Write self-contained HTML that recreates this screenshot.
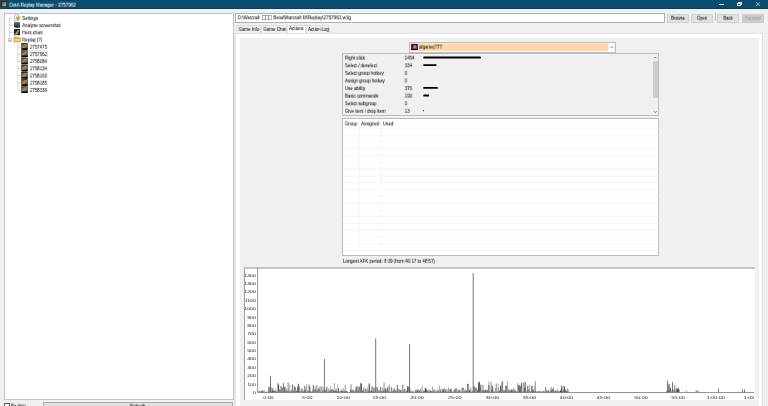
<!DOCTYPE html><html><head><meta charset="utf-8"><style>
html,body{margin:0;padding:0;}
body{width:768px;height:406px;overflow:hidden;position:relative;background:#f0f0f0;font-family:"Liberation Sans",sans-serif;}
.t{position:absolute;left:0;top:0;white-space:nowrap;line-height:1;transform-origin:0 0;will-change:transform;}
.b{position:absolute;box-sizing:border-box;}
svg{position:absolute;left:0;top:0;overflow:visible;}
</style></head><body>
<div class="b" style="left:0.00px;top:0.00px;width:768.00px;height:8.80px;background:#084d70;"></div>
<div class="b" style="left:0.00px;top:8.20px;width:768.00px;height:0.60px;background:#063f5c;"></div>
<svg width="768" height="406"><rect x="1.3" y="1.3" width="5.6" height="5.7" fill="#1c140c"/><path d="M2.0 2.0 h4.2 v4.3 h-4.2z" fill="#b48c5c"/><path d="M2.3 2.2 h2.2 v2.4 h-2.2z" fill="#7c5a36"/><path d="M4.4 4.4 h1.6 v1.6 h-1.6z" fill="#d4b080"/></svg>
<div class="t" style="transform:translate(9.40px,2.64px) scaleX(0.83);font-size:5.5px;color:#dbe8f0;-webkit-text-stroke:0.03px #dbe8f0;-webkit-text-stroke:0.1px #dbe8f0;">DotA Replay Manager - 2757962</div>
<div class="b" style="left:719.30px;top:4.20px;width:4.70px;height:0.45px;background:#dbe6ec;"></div>
<div class="b" style="left:737.20px;top:3.00px;width:3.80px;height:3.00px;border:0.45px solid #dbe6ec;"></div>
<div class="b" style="left:738.20px;top:2.20px;width:3.80px;height:3.00px;border-top:0.45px solid #dbe6ec;border-right:0.45px solid #dbe6ec;"></div>
<svg width="768" height="406"><path d="M755.9 2.3 L760.1 6.1 M760.1 2.3 L755.9 6.1" stroke="#e8eef2" stroke-width="0.65"/></svg>
<div class="b" style="left:4.00px;top:13.00px;width:229.90px;height:386.70px;background:#fff;border:0.8px solid #bfc3c9;"></div>
<svg width="768" height="406"><g stroke="#c0c0c0" stroke-width="0.6"><path d="M9.4 17.9 V38.2 M9.4 17.9 H13.8 M9.4 25.1 H13.8 M9.4 32.3 H13.8"/><path d="M17.8 42.5 V90.4 M17.8 47 H21 M17.8 54.2 H21 M17.8 61.4 H21 M17.8 68.6 H21 M17.8 75.8 H21 M17.8 83 H21 M17.8 90.2 H21"/></g></svg>
<div class="b" style="left:7.90px;top:38.00px;width:3.90px;height:3.90px;background:#f2f4f7;border:0.5px solid #c8ccd4;"></div>
<div class="b" style="left:8.90px;top:39.70px;width:1.90px;height:0.50px;background:#a0acc4;"></div>
<svg width="768" height="406"><defs><linearGradient id="gk" x1="0" y1="0" x2="1" y2="1"><stop offset="0" stop-color="#4a3c28"/><stop offset="0.5" stop-color="#a8895a"/><stop offset="1" stop-color="#5a4830"/></linearGradient><linearGradient id="fd" x1="0" y1="0" x2="0" y2="1"><stop offset="0" stop-color="#fbe9a8"/><stop offset="1" stop-color="#e0b040"/></linearGradient><linearGradient id="mn" x1="0" y1="0" x2="0" y2="1"><stop offset="0" stop-color="#6a6e74"/><stop offset="1" stop-color="#34383e"/></linearGradient></defs><rect x="14.3" y="14.8" width="4.6" height="5.8" fill="#eaf2fa" stroke="#8aa4c0" stroke-width="0.5"/><path d="M16.4 16.9 h1.8 v-1.1 l2.0 2.3 l-2.0 2.3 v-1.1 h-1.8z" fill="#e9a228" stroke="#b87810" stroke-width="0.3"/><rect x="14.0" y="22.0" width="6.0" height="4.6" rx="0.5" fill="url(#mn)"/><path d="M14.0 26.2 h6.0 v0.8 q-3 1.4 -6 0z" fill="#050505"/><circle cx="19.3" cy="22.9" r="0.6" fill="#2a8a80"/><circle cx="19.4" cy="26.9" r="0.75" fill="#2838b0"/><rect x="14.0" y="29.0" width="6.0" height="6.2" fill="#1e242c"/><path d="M15.0 34.6 L17.6 30.0 L19.4 30.6 L17.0 34.8z" fill="#c8a060"/><rect x="14.4" y="33.2" width="1.6" height="1.6" fill="#5080b0"/><path d="M14.1 37.0 h2.4 l0.7 0.8 h3.0 v4.1 h-6.1z" fill="#e0b040" stroke="#b88a28" stroke-width="0.6"/><path d="M14.8 39.0 h4.8 v2.2 h-4.8z" fill="#f8e070"/>
<rect x="21.1" y="43.10" width="6.6" height="6.7" fill="#231d12"/><rect x="21.1" y="43.90" width="0.9" height="5.2" fill="#6a6a6a"/><rect x="22.0" y="43.90" width="5.0" height="4.4" fill="url(#gk)"/><rect x="22.3" y="48.40" width="5.4" height="1.4" fill="#050505"/><rect x="21.1" y="50.30" width="6.6" height="6.7" fill="#231d12"/><rect x="21.1" y="51.10" width="0.9" height="5.2" fill="#6a6a6a"/><rect x="22.0" y="51.10" width="5.0" height="4.4" fill="url(#gk)"/><rect x="22.3" y="55.60" width="5.4" height="1.4" fill="#050505"/><rect x="21.1" y="57.50" width="6.6" height="6.7" fill="#231d12"/><rect x="21.1" y="58.30" width="0.9" height="5.2" fill="#6a6a6a"/><rect x="22.0" y="58.30" width="5.0" height="4.4" fill="url(#gk)"/><rect x="22.3" y="62.80" width="5.4" height="1.4" fill="#050505"/><rect x="21.1" y="64.70" width="6.6" height="6.7" fill="#231d12"/><rect x="21.1" y="65.50" width="0.9" height="5.2" fill="#6a6a6a"/><rect x="22.0" y="65.50" width="5.0" height="4.4" fill="url(#gk)"/><rect x="22.3" y="70.00" width="5.4" height="1.4" fill="#050505"/><rect x="21.1" y="71.90" width="6.6" height="6.7" fill="#231d12"/><rect x="21.1" y="72.70" width="0.9" height="5.2" fill="#6a6a6a"/><rect x="22.0" y="72.70" width="5.0" height="4.4" fill="url(#gk)"/><rect x="22.3" y="77.20" width="5.4" height="1.4" fill="#050505"/><rect x="21.1" y="79.10" width="6.6" height="6.7" fill="#231d12"/><rect x="21.1" y="79.90" width="0.9" height="5.2" fill="#6a6a6a"/><rect x="22.0" y="79.90" width="5.0" height="4.4" fill="url(#gk)"/><rect x="22.3" y="84.40" width="5.4" height="1.4" fill="#050505"/><rect x="21.1" y="86.30" width="6.6" height="6.7" fill="#231d12"/><rect x="21.1" y="87.10" width="0.9" height="5.2" fill="#6a6a6a"/><rect x="22.0" y="87.10" width="5.0" height="4.4" fill="url(#gk)"/><rect x="22.3" y="91.60" width="5.4" height="1.4" fill="#050505"/></svg>
<div class="t" style="transform:translate(22.20px,15.91px) scaleX(0.83);font-size:5.3px;color:#000;-webkit-text-stroke:0.03px #000;">Settings</div>
<div class="t" style="transform:translate(22.20px,23.11px) scaleX(0.83);font-size:5.3px;color:#000;-webkit-text-stroke:0.03px #000;">Analyze screenshot</div>
<div class="t" style="transform:translate(22.20px,30.31px) scaleX(0.83);font-size:5.3px;color:#000;-webkit-text-stroke:0.03px #000;">Hero chart</div>
<div class="t" style="transform:translate(22.20px,37.51px) scaleX(0.83);font-size:5.3px;color:#000;-webkit-text-stroke:0.03px #000;">Replay [7]</div>
<div class="t" style="transform:translate(29.90px,44.71px) scaleX(0.83);font-size:5.3px;color:#000;-webkit-text-stroke:0.03px #000;">2757475</div>
<div class="b" style="left:29.20px;top:50.20px;width:18.60px;height:7.30px;border:0.5px solid #ececec;"></div>
<div class="t" style="transform:translate(29.90px,51.91px) scaleX(0.83);font-size:5.3px;color:#000;-webkit-text-stroke:0.03px #000;">2757962</div>
<div class="t" style="transform:translate(29.90px,59.11px) scaleX(0.83);font-size:5.3px;color:#000;-webkit-text-stroke:0.03px #000;">2758084</div>
<div class="t" style="transform:translate(29.90px,66.31px) scaleX(0.83);font-size:5.3px;color:#000;-webkit-text-stroke:0.03px #000;">2758134</div>
<div class="t" style="transform:translate(29.90px,73.51px) scaleX(0.83);font-size:5.3px;color:#000;-webkit-text-stroke:0.03px #000;">2758160</div>
<div class="t" style="transform:translate(29.90px,80.71px) scaleX(0.83);font-size:5.3px;color:#000;-webkit-text-stroke:0.03px #000;">2758185</div>
<div class="t" style="transform:translate(29.90px,87.91px) scaleX(0.83);font-size:5.3px;color:#000;-webkit-text-stroke:0.03px #000;">2758339</div>
<div class="b" style="left:4.20px;top:403.00px;width:5.70px;height:5.70px;background:#fff;border:0.5px solid #555;"></div>
<div class="t" style="transform:translate(10.90px,403.51px) scaleX(0.83);font-size:5.3px;color:#000;-webkit-text-stroke:0.03px #000;">By date</div>
<div class="b" style="left:42.90px;top:402.20px;width:190.50px;height:6.00px;background:#e1e1e1;border:0.6px solid #adadad;"></div>
<div class="t" style="transform:translate(129.80px,403.81px) scaleX(0.83);font-size:5.3px;color:#000;-webkit-text-stroke:0.03px #000;">Refresh</div>
<div class="b" style="left:235.30px;top:13.00px;width:429.70px;height:10.00px;background:#fff;border:0.7px solid #b0b0b0;"></div>
<div class="t" style="transform:translate(237.80px,15.31px) scaleX(0.83);font-size:5.3px;color:#000;-webkit-text-stroke:0.03px #000;">D:\Warcraft</div>
<svg width="768" height="406"><rect x="262.3" y="15.3" width="2.9" height="4.5" fill="none" stroke="#7a7068" stroke-width="0.5"/><rect x="265.5" y="15.3" width="2.9" height="4.5" fill="none" stroke="#7a7068" stroke-width="0.5"/><rect x="268.7" y="15.3" width="2.9" height="4.5" fill="none" stroke="#7a7068" stroke-width="0.5"/></svg>
<div class="t" style="transform:translate(273.40px,15.31px) scaleX(0.87);font-size:5.3px;color:#000;-webkit-text-stroke:0.03px #000;">Beta\Warcraft III\Replay\2757962.w3g</div>
<div class="b" style="left:667.00px;top:14.00px;width:22.00px;height:9.00px;background:#e2e2e2;border:0.5px solid #cfcfcf;"></div>
<div class="t" style="transform:translate(671.10px,16.71px) scaleX(0.9);font-size:4.6px;color:#000;-webkit-text-stroke:0.03px #000;">Browse</div>
<div class="b" style="left:691.00px;top:14.00px;width:22.00px;height:9.00px;background:#e2e2e2;border:0.5px solid #cfcfcf;"></div>
<div class="t" style="transform:translate(696.94px,16.71px) scaleX(0.9);font-size:4.6px;color:#000;-webkit-text-stroke:0.03px #000;">Open</div>
<div class="b" style="left:717.00px;top:14.00px;width:22.00px;height:9.00px;background:#e2e2e2;border:0.5px solid #cfcfcf;"></div>
<div class="t" style="transform:translate(723.40px,16.71px) scaleX(0.9);font-size:4.6px;color:#000;-webkit-text-stroke:0.03px #000;">Back</div>
<div class="b" style="left:742.00px;top:14.00px;width:22.00px;height:9.00px;background:#cdcdcd;"></div>
<div class="t" style="transform:translate(745.41px,16.71px) scaleX(0.9);font-size:4.6px;color:#9c9c9c;-webkit-text-stroke:0.03px #9c9c9c;">Forward</div>
<div class="b" style="left:715.10px;top:13.20px;width:0.70px;height:7.80px;background:#bcbcbc;"></div>
<div class="b" style="left:234.00px;top:32.50px;width:529.40px;height:380.00px;background:#fff;border:0.7px solid #e2e2e2;border-left:2px solid #e6e6e6;"></div>
<div class="b" style="left:240.00px;top:38.00px;width:519.20px;height:370.00px;background:#f0f0f0;"></div>
<div class="b" style="left:236.40px;top:25.30px;width:24.70px;height:7.60px;background:#f0f0f0;border:0.6px solid #dedede;border-bottom:none;"></div>
<div class="t" style="transform:translate(238.60px,27.91px) scaleX(0.96);font-size:4.6px;color:#000;-webkit-text-stroke:0.03px #000;-webkit-text-stroke:0.03px #000;">Game Info</div>
<div class="b" style="left:261.30px;top:25.30px;width:25.50px;height:7.60px;background:#f0f0f0;border:0.6px solid #dedede;border-bottom:none;"></div>
<div class="t" style="transform:translate(263.40px,27.91px) scaleX(0.96);font-size:4.6px;color:#000;-webkit-text-stroke:0.03px #000;-webkit-text-stroke:0.03px #000;">Game Chat</div>
<div class="b" style="left:306.20px;top:25.30px;width:23.20px;height:7.60px;background:#f0f0f0;border:0.6px solid #dedede;border-bottom:none;"></div>
<div class="t" style="transform:translate(308.10px,27.91px) scaleX(0.96);font-size:4.6px;color:#000;-webkit-text-stroke:0.03px #000;-webkit-text-stroke:0.03px #000;">Action Log</div>
<div class="b" style="left:287.00px;top:24.80px;width:18.80px;height:8.40px;background:#fff;border:0.6px solid #dedede;border-bottom:none;"></div>
<div class="t" style="transform:translate(289.00px,27.11px) scaleX(0.96);font-size:4.6px;color:#000;-webkit-text-stroke:0.03px #000;-webkit-text-stroke:0.03px #000;">Actions</div>
<div class="b" style="left:409.40px;top:42.20px;width:206.60px;height:10.60px;background:#fff;border:0.6px solid #bcbcbc;"></div>
<svg width="768" height="406"><rect x="410.3" y="43.4" width="198.1" height="7.6" fill="#fed6a8"/><rect x="411.2" y="43.9" width="6.6" height="6.1" fill="#18121e"/><path d="M412.2 49.6 L413.0 45.2 L414.6 44.4 L416.6 45.6 L417.2 49.6z" fill="#6a58a0"/><path d="M413.4 46.0 L415.6 45.4 L416.2 48.0 L414.0 48.6z" fill="#9c8cc8"/><rect x="411.2" y="48.8" width="6.6" height="1.2" fill="#0a0810"/></svg>
<div class="t" style="transform:translate(419.00px,44.61px) scaleX(0.83);font-size:5.3px;color:#000;-webkit-text-stroke:0.03px #000;">afganec777</div>
<svg width="768" height="406"><path d="M610.6 46.6 L611.9 47.9 L613.2 46.6" fill="none" stroke="#404040" stroke-width="0.6"/></svg>
<div class="b" style="left:342.30px;top:53.40px;width:316.70px;height:62.30px;background:#f0f0f0;border:0.7px solid #bcbcbc;"></div>
<div class="t" style="transform:translate(344.90px,55.61px) scaleX(0.83);font-size:5.3px;color:#000;-webkit-text-stroke:0.03px #000;">Right click</div>
<div class="t" style="transform:translate(404.70px,55.61px) scaleX(0.83);font-size:5.3px;color:#000;-webkit-text-stroke:0.03px #000;">1454</div>
<svg width="768" height="406"><rect x="423.3" y="56.60" width="57.6" height="1.8" rx="0.4" fill="#000"/></svg>
<div class="t" style="transform:translate(344.90px,63.21px) scaleX(0.83);font-size:5.3px;color:#000;-webkit-text-stroke:0.03px #000;">Select / deselect</div>
<div class="t" style="transform:translate(404.70px,63.21px) scaleX(0.83);font-size:5.3px;color:#000;-webkit-text-stroke:0.03px #000;">334</div>
<svg width="768" height="406"><rect x="423.3" y="64.20" width="13.2" height="1.8" rx="0.4" fill="#000"/></svg>
<div class="t" style="transform:translate(344.90px,70.81px) scaleX(0.83);font-size:5.3px;color:#000;-webkit-text-stroke:0.03px #000;">Select group hotkey</div>
<div class="t" style="transform:translate(404.70px,70.81px) scaleX(0.83);font-size:5.3px;color:#000;-webkit-text-stroke:0.03px #000;">0</div>
<div class="t" style="transform:translate(344.90px,78.41px) scaleX(0.83);font-size:5.3px;color:#000;-webkit-text-stroke:0.03px #000;">Assign group hotkey</div>
<div class="t" style="transform:translate(404.70px,78.41px) scaleX(0.83);font-size:5.3px;color:#000;-webkit-text-stroke:0.03px #000;">0</div>
<div class="t" style="transform:translate(344.90px,86.01px) scaleX(0.83);font-size:5.3px;color:#000;-webkit-text-stroke:0.03px #000;">Use ability</div>
<div class="t" style="transform:translate(404.70px,86.01px) scaleX(0.83);font-size:5.3px;color:#000;-webkit-text-stroke:0.03px #000;">376</div>
<svg width="768" height="406"><rect x="423.3" y="87.00" width="14.5" height="1.8" rx="0.4" fill="#000"/></svg>
<div class="t" style="transform:translate(344.90px,93.61px) scaleX(0.83);font-size:5.3px;color:#000;-webkit-text-stroke:0.03px #000;">Basic commands</div>
<div class="t" style="transform:translate(404.70px,93.61px) scaleX(0.83);font-size:5.3px;color:#000;-webkit-text-stroke:0.03px #000;">190</div>
<svg width="768" height="406"><rect x="423.3" y="94.60" width="5.8" height="1.8" rx="0.4" fill="#000"/></svg>
<div class="t" style="transform:translate(344.90px,101.21px) scaleX(0.83);font-size:5.3px;color:#000;-webkit-text-stroke:0.03px #000;">Select subgroup</div>
<div class="t" style="transform:translate(404.70px,101.21px) scaleX(0.83);font-size:5.3px;color:#000;-webkit-text-stroke:0.03px #000;">0</div>
<div class="t" style="transform:translate(344.90px,108.81px) scaleX(0.83);font-size:5.3px;color:#000;-webkit-text-stroke:0.03px #000;">Give item / drop item</div>
<div class="t" style="transform:translate(404.70px,108.81px) scaleX(0.83);font-size:5.3px;color:#000;-webkit-text-stroke:0.03px #000;">13</div>
<svg width="768" height="406"><rect x="423.3" y="109.80" width="0.5" height="1.8" rx="0.4" fill="#000"/></svg>
<div class="b" style="left:651.40px;top:54.10px;width:7.00px;height:61.00px;background:#f0f0f0;"></div>
<div class="b" style="left:652.50px;top:61.30px;width:5.60px;height:37.00px;background:#cdcdcd;"></div>
<svg width="768" height="406"><path d="M654 58.3 L655.3 57 L656.6 58.3 M654 111.3 L655.3 112.6 L656.6 111.3" fill="none" stroke="#404040" stroke-width="0.7"/></svg>
<div class="b" style="left:342.30px;top:118.40px;width:317.20px;height:137.60px;background:#fff;border:0.7px solid #bcbcbc;"></div>
<svg width="768" height="406"><g stroke="#ebebeb" stroke-width="0.5">
<path d="M343 128.3 H659"/>
<path d="M343 135.1 H659"/>
<path d="M343 141.9 H659"/>
<path d="M343 148.7 H659"/>
<path d="M343 155.5 H659"/>
<path d="M343 162.3 H659"/>
<path d="M343 169.1 H659"/>
<path d="M343 175.9 H659"/>
<path d="M343 182.7 H659"/>
<path d="M343 189.5 H659"/>
<path d="M343 196.3 H659"/>
<path d="M343 203.1 H659"/>
<path d="M343 209.9 H659"/>
<path d="M343 216.7 H659"/>
<path d="M343 223.5 H659"/>
<path d="M343 230.3 H659"/>
<path d="M343 237.1 H659"/>
<path d="M343 243.9 H659"/>
<path d="M343 250.7 H659"/>
<path d="M359.2 119 V254.6 M381.1 119 V254.6"/></g></svg>
<div class="t" style="transform:translate(344.80px,121.41px) scaleX(0.83);font-size:5.3px;color:#000;-webkit-text-stroke:0.03px #000;">Group</div>
<div class="t" style="transform:translate(361.10px,121.41px) scaleX(0.83);font-size:5.3px;color:#000;-webkit-text-stroke:0.03px #000;">Assigned</div>
<div class="t" style="transform:translate(383.00px,121.41px) scaleX(0.83);font-size:5.3px;color:#000;-webkit-text-stroke:0.03px #000;">Used</div>
<div class="t" style="transform:translate(343.00px,258.81px) scaleX(0.83);font-size:5.3px;color:#000;-webkit-text-stroke:0.03px #000;">Longest AFK period: 8:39 (from 40:17 to 48:57)</div>
<div class="b" style="left:244.40px;top:267.10px;width:510.20px;height:132.70px;background:#fff;border-left:0.9px solid #a0a0a0;border-top:2px solid #c6c6c6;"></div>
<svg width="768" height="406"><rect x="258.50" y="391.05" width="0.7" height="1.45" fill="#4e4e4e"/><rect x="259.10" y="391.19" width="0.7" height="1.31" fill="#4e4e4e"/><rect x="259.70" y="391.61" width="0.7" height="0.89" fill="#8c8c8c"/><rect x="260.90" y="391.07" width="1.4" height="1.43" fill="#4e4e4e"/><rect x="261.50" y="391.14" width="1.1" height="1.36" fill="#666666"/><rect x="262.10" y="391.13" width="0.9" height="1.37" fill="#a0a0a0"/><rect x="262.70" y="390.47" width="0.7" height="2.03" fill="#4e4e4e"/><rect x="263.30" y="390.10" width="1.4" height="2.40" fill="#a0a0a0"/><rect x="265.80" y="391.54" width="1.1" height="0.96" fill="#4e4e4e"/><rect x="268.00" y="386.91" width="0.9" height="5.59" fill="#8c8c8c"/><rect x="268.60" y="390.87" width="0.7" height="1.63" fill="#4e4e4e"/><rect x="269.20" y="386.94" width="1.1" height="5.56" fill="#7a7a7a"/><rect x="269.80" y="387.97" width="0.7" height="4.53" fill="#8c8c8c"/><rect x="270.40" y="385.13" width="0.7" height="7.37" fill="#b0b0b0"/><rect x="271.00" y="387.74" width="1.4" height="4.76" fill="#b0b0b0"/><rect x="271.60" y="390.56" width="1.4" height="1.94" fill="#4e4e4e"/><rect x="272.20" y="388.27" width="1.1" height="4.23" fill="#666666"/><rect x="272.80" y="391.04" width="1.4" height="1.46" fill="#585858"/><rect x="273.40" y="390.77" width="1.4" height="1.73" fill="#666666"/><rect x="274.00" y="390.99" width="1.4" height="1.51" fill="#7a7a7a"/><rect x="274.60" y="391.40" width="0.9" height="1.10" fill="#666666"/><rect x="275.20" y="389.36" width="0.7" height="3.14" fill="#7a7a7a"/><rect x="275.80" y="390.66" width="0.9" height="1.84" fill="#7a7a7a"/><rect x="276.40" y="390.65" width="0.7" height="1.85" fill="#b0b0b0"/><rect x="277.00" y="382.74" width="1.4" height="9.76" fill="#b0b0b0"/><rect x="277.60" y="390.88" width="0.7" height="1.62" fill="#8c8c8c"/><rect x="278.00" y="384.58" width="1.1" height="7.92" fill="#4e4e4e"/><rect x="278.60" y="390.57" width="0.7" height="1.93" fill="#a0a0a0"/><rect x="279.20" y="389.43" width="1.4" height="3.07" fill="#666666"/><rect x="279.80" y="391.01" width="1.4" height="1.49" fill="#7a7a7a"/><rect x="280.40" y="385.93" width="1.4" height="6.57" fill="#8c8c8c"/><rect x="281.00" y="391.50" width="1.1" height="1.00" fill="#7a7a7a"/><rect x="281.60" y="387.74" width="1.1" height="4.76" fill="#666666"/><rect x="282.20" y="391.65" width="1.1" height="0.85" fill="#a0a0a0"/><rect x="282.80" y="383.17" width="1.1" height="9.33" fill="#7a7a7a"/><rect x="283.40" y="391.25" width="1.1" height="1.25" fill="#a0a0a0"/><rect x="284.00" y="386.70" width="0.9" height="5.80" fill="#585858"/><rect x="284.60" y="386.89" width="0.9" height="5.61" fill="#666666"/><rect x="285.20" y="391.64" width="1.1" height="0.86" fill="#4e4e4e"/><rect x="285.80" y="390.49" width="1.4" height="2.01" fill="#7a7a7a"/><rect x="286.40" y="388.37" width="0.7" height="4.13" fill="#7a7a7a"/><rect x="287.00" y="391.31" width="1.4" height="1.19" fill="#666666"/><rect x="287.60" y="382.38" width="1.1" height="10.12" fill="#8c8c8c"/><rect x="288.20" y="390.38" width="0.9" height="2.12" fill="#8c8c8c"/><rect x="288.80" y="390.12" width="0.7" height="2.38" fill="#7a7a7a"/><rect x="289.40" y="384.82" width="0.7" height="7.68" fill="#8c8c8c"/><rect x="290.00" y="391.45" width="1.4" height="1.05" fill="#666666"/><rect x="290.60" y="390.05" width="1.1" height="2.45" fill="#8c8c8c"/><rect x="291.20" y="391.66" width="0.7" height="0.84" fill="#585858"/><rect x="291.80" y="384.61" width="0.9" height="7.89" fill="#585858"/><rect x="292.40" y="391.20" width="0.9" height="1.30" fill="#7a7a7a"/><rect x="293.00" y="390.61" width="0.9" height="1.89" fill="#585858"/><rect x="293.60" y="386.29" width="1.4" height="6.21" fill="#b0b0b0"/><rect x="294.20" y="386.28" width="0.7" height="6.22" fill="#666666"/><rect x="294.80" y="387.39" width="0.9" height="5.11" fill="#585858"/><rect x="295.40" y="390.25" width="0.7" height="2.25" fill="#a0a0a0"/><rect x="296.00" y="390.59" width="0.7" height="1.91" fill="#585858"/><rect x="296.60" y="391.32" width="0.7" height="1.18" fill="#4e4e4e"/><rect x="297.20" y="386.81" width="1.4" height="5.69" fill="#4e4e4e"/><rect x="297.80" y="383.67" width="1.1" height="8.83" fill="#666666"/><rect x="298.40" y="390.74" width="1.1" height="1.76" fill="#666666"/><rect x="299.00" y="385.89" width="0.9" height="6.61" fill="#8c8c8c"/><rect x="299.60" y="391.07" width="0.9" height="1.43" fill="#b0b0b0"/><rect x="300.20" y="391.09" width="0.9" height="1.41" fill="#4e4e4e"/><rect x="300.80" y="388.31" width="0.9" height="4.19" fill="#7a7a7a"/><rect x="301.40" y="389.79" width="1.4" height="2.71" fill="#8c8c8c"/><rect x="302.00" y="388.85" width="1.4" height="3.65" fill="#b0b0b0"/><rect x="302.60" y="390.86" width="1.1" height="1.64" fill="#7a7a7a"/><rect x="303.20" y="391.02" width="1.4" height="1.48" fill="#8c8c8c"/><rect x="303.80" y="390.67" width="0.7" height="1.83" fill="#7a7a7a"/><rect x="304.40" y="385.74" width="0.7" height="6.76" fill="#4e4e4e"/><rect x="305.00" y="390.14" width="0.9" height="2.36" fill="#7a7a7a"/><rect x="305.60" y="387.13" width="1.4" height="5.37" fill="#7a7a7a"/><rect x="306.20" y="383.86" width="1.1" height="8.64" fill="#b0b0b0"/><rect x="306.80" y="390.32" width="0.7" height="2.18" fill="#8c8c8c"/><rect x="307.40" y="391.52" width="0.7" height="0.98" fill="#7a7a7a"/><rect x="308.00" y="391.17" width="1.4" height="1.33" fill="#4e4e4e"/><rect x="308.60" y="384.70" width="0.9" height="7.80" fill="#7a7a7a"/><rect x="309.20" y="386.14" width="1.1" height="6.36" fill="#666666"/><rect x="309.80" y="391.08" width="0.9" height="1.42" fill="#7a7a7a"/><rect x="310.40" y="391.34" width="0.7" height="1.16" fill="#7a7a7a"/><rect x="311.00" y="391.66" width="0.9" height="0.84" fill="#a0a0a0"/><rect x="311.60" y="390.81" width="1.4" height="1.69" fill="#b0b0b0"/><rect x="312.20" y="389.92" width="1.1" height="2.58" fill="#a0a0a0"/><rect x="312.80" y="385.12" width="0.9" height="7.38" fill="#585858"/><rect x="313.40" y="391.59" width="0.7" height="0.91" fill="#666666"/><rect x="314.00" y="388.73" width="0.7" height="3.77" fill="#666666"/><rect x="314.60" y="386.39" width="1.1" height="6.11" fill="#b0b0b0"/><rect x="315.20" y="389.53" width="0.9" height="2.97" fill="#666666"/><rect x="315.80" y="390.97" width="1.1" height="1.53" fill="#7a7a7a"/><rect x="316.40" y="385.30" width="0.9" height="7.20" fill="#7a7a7a"/><rect x="317.00" y="390.75" width="0.9" height="1.75" fill="#a0a0a0"/><rect x="317.60" y="389.35" width="0.7" height="3.15" fill="#585858"/><rect x="318.20" y="388.20" width="1.1" height="4.30" fill="#7a7a7a"/><rect x="318.80" y="389.78" width="0.9" height="2.72" fill="#585858"/><rect x="319.40" y="386.36" width="1.1" height="6.14" fill="#8c8c8c"/><rect x="320.00" y="391.13" width="0.9" height="1.37" fill="#a0a0a0"/><rect x="320.60" y="386.31" width="1.4" height="6.19" fill="#b0b0b0"/><rect x="321.20" y="389.17" width="0.7" height="3.33" fill="#a0a0a0"/><rect x="321.80" y="386.31" width="0.9" height="6.19" fill="#b0b0b0"/><rect x="322.40" y="390.43" width="1.4" height="2.07" fill="#4e4e4e"/><rect x="323.00" y="387.31" width="0.9" height="5.19" fill="#b0b0b0"/><rect x="323.60" y="390.10" width="0.7" height="2.40" fill="#b0b0b0"/><rect x="324.20" y="390.23" width="0.7" height="2.27" fill="#7a7a7a"/><rect x="324.80" y="390.19" width="1.4" height="2.31" fill="#666666"/><rect x="325.40" y="390.74" width="1.1" height="1.76" fill="#b0b0b0"/><rect x="326.00" y="387.26" width="0.9" height="5.24" fill="#4e4e4e"/><rect x="326.60" y="387.07" width="0.9" height="5.43" fill="#a0a0a0"/><rect x="327.20" y="391.16" width="0.7" height="1.34" fill="#b0b0b0"/><rect x="327.80" y="388.59" width="1.1" height="3.91" fill="#a0a0a0"/><rect x="328.40" y="391.46" width="0.9" height="1.04" fill="#a0a0a0"/><rect x="329.00" y="390.75" width="1.4" height="1.75" fill="#7a7a7a"/><rect x="329.60" y="389.71" width="1.4" height="2.79" fill="#7a7a7a"/><rect x="330.20" y="385.84" width="0.7" height="6.66" fill="#a0a0a0"/><rect x="330.80" y="389.79" width="1.1" height="2.71" fill="#666666"/><rect x="331.40" y="388.82" width="1.4" height="3.68" fill="#8c8c8c"/><rect x="332.00" y="390.72" width="1.4" height="1.78" fill="#8c8c8c"/><rect x="332.60" y="391.01" width="0.7" height="1.49" fill="#7a7a7a"/><rect x="333.20" y="390.20" width="1.4" height="2.30" fill="#585858"/><rect x="333.80" y="383.08" width="1.1" height="9.42" fill="#b0b0b0"/><rect x="334.40" y="390.92" width="0.7" height="1.58" fill="#585858"/><rect x="335.00" y="391.15" width="1.1" height="1.35" fill="#4e4e4e"/><rect x="335.60" y="388.61" width="0.9" height="3.89" fill="#666666"/><rect x="336.20" y="391.07" width="1.1" height="1.43" fill="#585858"/><rect x="336.80" y="391.64" width="1.4" height="0.86" fill="#585858"/><rect x="337.40" y="383.98" width="0.7" height="8.52" fill="#b0b0b0"/><rect x="338.00" y="387.99" width="0.9" height="4.51" fill="#585858"/><rect x="338.60" y="391.60" width="0.9" height="0.90" fill="#a0a0a0"/><rect x="339.20" y="391.14" width="1.1" height="1.36" fill="#7a7a7a"/><rect x="339.80" y="390.73" width="1.4" height="1.77" fill="#b0b0b0"/><rect x="340.40" y="389.41" width="1.4" height="3.09" fill="#a0a0a0"/><rect x="341.00" y="391.03" width="1.4" height="1.47" fill="#585858"/><rect x="341.60" y="391.21" width="1.1" height="1.29" fill="#666666"/><rect x="342.20" y="390.96" width="0.9" height="1.54" fill="#585858"/><rect x="342.80" y="388.13" width="0.9" height="4.37" fill="#8c8c8c"/><rect x="343.40" y="391.58" width="1.1" height="0.92" fill="#7a7a7a"/><rect x="344.00" y="390.44" width="0.9" height="2.06" fill="#585858"/><rect x="344.60" y="384.88" width="1.4" height="7.62" fill="#b0b0b0"/><rect x="345.00" y="391.37" width="0.9" height="1.13" fill="#4e4e4e"/><rect x="345.60" y="391.03" width="1.4" height="1.47" fill="#8c8c8c"/><rect x="346.20" y="391.33" width="1.4" height="1.17" fill="#585858"/><rect x="347.40" y="391.64" width="0.7" height="0.86" fill="#a0a0a0"/><rect x="350.00" y="389.57" width="0.9" height="2.93" fill="#585858"/><rect x="350.60" y="384.27" width="0.9" height="8.23" fill="#7a7a7a"/><rect x="351.20" y="390.83" width="0.7" height="1.67" fill="#585858"/><rect x="351.80" y="389.81" width="1.4" height="2.69" fill="#666666"/><rect x="352.40" y="389.70" width="1.1" height="2.80" fill="#a0a0a0"/><rect x="353.00" y="391.07" width="0.9" height="1.43" fill="#585858"/><rect x="353.60" y="391.21" width="1.1" height="1.29" fill="#8c8c8c"/><rect x="354.20" y="389.93" width="1.4" height="2.57" fill="#b0b0b0"/><rect x="354.80" y="390.85" width="0.9" height="1.65" fill="#7a7a7a"/><rect x="355.40" y="387.40" width="1.4" height="5.10" fill="#7a7a7a"/><rect x="356.00" y="387.33" width="0.7" height="5.17" fill="#a0a0a0"/><rect x="356.60" y="385.94" width="0.9" height="6.56" fill="#585858"/><rect x="357.20" y="390.18" width="0.7" height="2.32" fill="#7a7a7a"/><rect x="357.80" y="391.33" width="1.4" height="1.17" fill="#666666"/><rect x="358.40" y="386.66" width="1.4" height="5.84" fill="#666666"/><rect x="359.00" y="390.51" width="0.7" height="1.99" fill="#8c8c8c"/><rect x="359.60" y="390.80" width="1.1" height="1.70" fill="#b0b0b0"/><rect x="360.20" y="382.84" width="0.9" height="9.66" fill="#7a7a7a"/><rect x="360.80" y="383.77" width="1.1" height="8.73" fill="#4e4e4e"/><rect x="361.40" y="390.95" width="1.4" height="1.55" fill="#7a7a7a"/><rect x="362.00" y="391.14" width="1.4" height="1.36" fill="#7a7a7a"/><rect x="362.60" y="389.77" width="1.4" height="2.73" fill="#666666"/><rect x="363.20" y="387.07" width="0.7" height="5.43" fill="#8c8c8c"/><rect x="363.80" y="390.95" width="0.9" height="1.55" fill="#8c8c8c"/><rect x="364.40" y="388.18" width="1.4" height="4.32" fill="#b0b0b0"/><rect x="365.00" y="388.40" width="0.7" height="4.10" fill="#8c8c8c"/><rect x="365.60" y="389.50" width="0.7" height="3.00" fill="#666666"/><rect x="366.20" y="391.16" width="0.7" height="1.34" fill="#a0a0a0"/><rect x="366.80" y="388.69" width="1.1" height="3.81" fill="#7a7a7a"/><rect x="367.40" y="386.77" width="0.7" height="5.73" fill="#b0b0b0"/><rect x="368.00" y="390.75" width="1.4" height="1.75" fill="#8c8c8c"/><rect x="368.60" y="383.43" width="1.4" height="9.07" fill="#666666"/><rect x="369.20" y="387.34" width="0.9" height="5.16" fill="#585858"/><rect x="369.80" y="391.06" width="0.7" height="1.44" fill="#7a7a7a"/><rect x="370.40" y="391.38" width="0.7" height="1.12" fill="#8c8c8c"/><rect x="371.00" y="390.61" width="1.4" height="1.89" fill="#666666"/><rect x="371.60" y="386.18" width="0.9" height="6.32" fill="#4e4e4e"/><rect x="372.20" y="390.28" width="0.9" height="2.22" fill="#8c8c8c"/><rect x="372.80" y="390.46" width="0.9" height="2.04" fill="#b0b0b0"/><rect x="373.40" y="387.57" width="1.1" height="4.93" fill="#4e4e4e"/><rect x="374.00" y="388.51" width="1.1" height="3.99" fill="#b0b0b0"/><rect x="374.60" y="391.21" width="1.1" height="1.29" fill="#666666"/><rect x="375.20" y="388.66" width="1.1" height="3.84" fill="#8c8c8c"/><rect x="375.80" y="391.24" width="0.7" height="1.26" fill="#585858"/><rect x="376.40" y="386.99" width="0.9" height="5.51" fill="#8c8c8c"/><rect x="377.00" y="387.30" width="0.9" height="5.20" fill="#7a7a7a"/><rect x="377.60" y="389.75" width="0.9" height="2.75" fill="#a0a0a0"/><rect x="378.20" y="389.97" width="1.1" height="2.53" fill="#8c8c8c"/><rect x="378.80" y="389.68" width="1.1" height="2.82" fill="#b0b0b0"/><rect x="379.40" y="391.42" width="1.1" height="1.08" fill="#666666"/><rect x="380.00" y="386.78" width="0.7" height="5.72" fill="#585858"/><rect x="380.60" y="390.96" width="1.1" height="1.54" fill="#a0a0a0"/><rect x="381.20" y="390.71" width="0.7" height="1.79" fill="#8c8c8c"/><rect x="381.80" y="387.58" width="0.7" height="4.92" fill="#666666"/><rect x="382.40" y="391.16" width="1.1" height="1.34" fill="#7a7a7a"/><rect x="383.00" y="390.21" width="1.4" height="2.29" fill="#7a7a7a"/><rect x="383.60" y="382.52" width="0.9" height="9.98" fill="#7a7a7a"/><rect x="384.20" y="389.82" width="0.9" height="2.68" fill="#8c8c8c"/><rect x="384.80" y="388.40" width="1.4" height="4.10" fill="#7a7a7a"/><rect x="385.40" y="391.60" width="1.4" height="0.90" fill="#666666"/><rect x="386.00" y="388.51" width="0.9" height="3.99" fill="#a0a0a0"/><rect x="386.60" y="390.66" width="0.7" height="1.84" fill="#4e4e4e"/><rect x="387.20" y="387.17" width="0.9" height="5.33" fill="#585858"/><rect x="387.80" y="389.56" width="1.1" height="2.94" fill="#8c8c8c"/><rect x="388.40" y="385.56" width="0.9" height="6.94" fill="#b0b0b0"/><rect x="389.00" y="384.39" width="0.9" height="8.11" fill="#a0a0a0"/><rect x="389.60" y="391.26" width="0.9" height="1.24" fill="#8c8c8c"/><rect x="390.20" y="391.21" width="0.9" height="1.29" fill="#b0b0b0"/><rect x="390.80" y="387.28" width="1.1" height="5.22" fill="#4e4e4e"/><rect x="391.40" y="387.94" width="1.1" height="4.56" fill="#b0b0b0"/><rect x="392.00" y="391.20" width="1.1" height="1.30" fill="#8c8c8c"/><rect x="392.60" y="391.65" width="1.4" height="0.85" fill="#a0a0a0"/><rect x="393.20" y="390.46" width="1.4" height="2.04" fill="#585858"/><rect x="393.80" y="388.42" width="0.9" height="4.08" fill="#4e4e4e"/><rect x="394.40" y="390.10" width="0.7" height="2.40" fill="#a0a0a0"/><rect x="395.00" y="389.86" width="0.7" height="2.64" fill="#7a7a7a"/><rect x="395.60" y="390.94" width="0.9" height="1.56" fill="#585858"/><rect x="396.20" y="390.47" width="0.7" height="2.03" fill="#b0b0b0"/><rect x="396.80" y="385.04" width="0.9" height="7.46" fill="#585858"/><rect x="397.40" y="388.99" width="1.1" height="3.51" fill="#585858"/><rect x="398.00" y="391.05" width="1.1" height="1.45" fill="#a0a0a0"/><rect x="398.60" y="391.19" width="0.9" height="1.31" fill="#8c8c8c"/><rect x="399.20" y="388.94" width="0.7" height="3.56" fill="#7a7a7a"/><rect x="399.80" y="390.43" width="1.1" height="2.07" fill="#7a7a7a"/><rect x="400.40" y="390.13" width="0.7" height="2.37" fill="#4e4e4e"/><rect x="401.00" y="389.95" width="0.7" height="2.55" fill="#a0a0a0"/><rect x="401.60" y="389.99" width="1.1" height="2.51" fill="#b0b0b0"/><rect x="402.20" y="384.61" width="1.1" height="7.89" fill="#7a7a7a"/><rect x="402.80" y="391.35" width="0.7" height="1.15" fill="#b0b0b0"/><rect x="403.40" y="391.08" width="1.1" height="1.42" fill="#585858"/><rect x="404.00" y="388.99" width="1.4" height="3.51" fill="#7a7a7a"/><rect x="404.60" y="391.60" width="0.9" height="0.90" fill="#8c8c8c"/><rect x="405.20" y="391.59" width="1.1" height="0.91" fill="#a0a0a0"/><rect x="405.80" y="390.63" width="1.1" height="1.87" fill="#8c8c8c"/><rect x="406.40" y="390.45" width="0.9" height="2.05" fill="#8c8c8c"/><rect x="407.00" y="386.28" width="1.4" height="6.22" fill="#666666"/><rect x="407.60" y="386.91" width="1.1" height="5.59" fill="#585858"/><rect x="408.20" y="391.68" width="1.1" height="0.82" fill="#b0b0b0"/><rect x="408.80" y="387.77" width="1.4" height="4.73" fill="#a0a0a0"/><rect x="409.40" y="387.28" width="0.7" height="5.22" fill="#a0a0a0"/><rect x="410.00" y="391.68" width="0.7" height="0.82" fill="#585858"/><rect x="410.60" y="390.74" width="1.4" height="1.76" fill="#666666"/><rect x="411.20" y="391.00" width="1.4" height="1.50" fill="#b0b0b0"/><rect x="412.40" y="391.58" width="1.4" height="0.92" fill="#4e4e4e"/><rect x="413.60" y="390.85" width="0.7" height="1.65" fill="#8c8c8c"/><rect x="414.80" y="391.66" width="0.7" height="0.84" fill="#666666"/><rect x="415.40" y="389.61" width="1.1" height="2.89" fill="#585858"/><rect x="416.60" y="391.04" width="1.1" height="1.46" fill="#585858"/><rect x="417.20" y="389.66" width="0.7" height="2.84" fill="#4e4e4e"/><rect x="417.80" y="389.74" width="0.9" height="2.76" fill="#666666"/><rect x="419.00" y="390.51" width="1.4" height="1.99" fill="#666666"/><rect x="420.00" y="388.57" width="1.4" height="3.93" fill="#a0a0a0"/><rect x="420.60" y="391.69" width="1.4" height="0.81" fill="#4e4e4e"/><rect x="421.80" y="385.34" width="0.7" height="7.16" fill="#8c8c8c"/><rect x="422.40" y="391.65" width="0.7" height="0.85" fill="#4e4e4e"/><rect x="423.00" y="390.33" width="0.7" height="2.17" fill="#b0b0b0"/><rect x="423.60" y="390.80" width="0.7" height="1.70" fill="#4e4e4e"/><rect x="424.20" y="390.87" width="0.9" height="1.63" fill="#7a7a7a"/><rect x="424.80" y="387.98" width="1.4" height="4.52" fill="#4e4e4e"/><rect x="425.40" y="391.54" width="0.7" height="0.96" fill="#4e4e4e"/><rect x="426.00" y="389.55" width="0.9" height="2.95" fill="#4e4e4e"/><rect x="426.60" y="389.77" width="1.1" height="2.73" fill="#7a7a7a"/><rect x="427.20" y="391.34" width="0.7" height="1.16" fill="#7a7a7a"/><rect x="427.80" y="391.25" width="1.4" height="1.25" fill="#a0a0a0"/><rect x="428.40" y="390.22" width="0.7" height="2.28" fill="#8c8c8c"/><rect x="429.00" y="389.40" width="0.7" height="3.10" fill="#b0b0b0"/><rect x="429.60" y="390.49" width="1.1" height="2.01" fill="#4e4e4e"/><rect x="430.20" y="391.42" width="0.7" height="1.08" fill="#585858"/><rect x="430.80" y="391.01" width="0.9" height="1.49" fill="#585858"/><rect x="432.00" y="386.44" width="0.9" height="6.06" fill="#a0a0a0"/><rect x="432.60" y="390.72" width="0.9" height="1.78" fill="#8c8c8c"/><rect x="433.20" y="390.09" width="0.7" height="2.41" fill="#585858"/><rect x="433.80" y="391.14" width="0.7" height="1.36" fill="#8c8c8c"/><rect x="434.40" y="389.33" width="1.1" height="3.17" fill="#7a7a7a"/><rect x="435.00" y="391.46" width="0.9" height="1.04" fill="#b0b0b0"/><rect x="435.60" y="390.87" width="0.7" height="1.63" fill="#b0b0b0"/><rect x="436.20" y="391.48" width="1.4" height="1.02" fill="#585858"/><rect x="436.80" y="389.86" width="1.1" height="2.64" fill="#8c8c8c"/><rect x="437.40" y="391.05" width="0.9" height="1.45" fill="#b0b0b0"/><rect x="438.00" y="390.64" width="0.9" height="1.86" fill="#585858"/><rect x="438.60" y="385.61" width="1.1" height="6.89" fill="#a0a0a0"/><rect x="439.20" y="391.44" width="0.7" height="1.06" fill="#b0b0b0"/><rect x="439.80" y="389.79" width="0.9" height="2.71" fill="#666666"/><rect x="440.40" y="389.17" width="0.7" height="3.33" fill="#666666"/><rect x="441.00" y="391.41" width="1.4" height="1.09" fill="#8c8c8c"/><rect x="441.60" y="390.59" width="0.9" height="1.91" fill="#b0b0b0"/><rect x="442.20" y="389.10" width="1.1" height="3.40" fill="#666666"/><rect x="442.80" y="390.66" width="1.4" height="1.84" fill="#585858"/><rect x="443.40" y="388.62" width="0.9" height="3.88" fill="#585858"/><rect x="444.00" y="388.02" width="0.9" height="4.48" fill="#b0b0b0"/><rect x="444.60" y="389.12" width="1.1" height="3.38" fill="#7a7a7a"/><rect x="445.20" y="391.11" width="1.4" height="1.39" fill="#585858"/><rect x="445.80" y="389.65" width="1.4" height="2.85" fill="#8c8c8c"/><rect x="446.40" y="389.24" width="0.9" height="3.26" fill="#b0b0b0"/><rect x="447.00" y="391.69" width="1.4" height="0.81" fill="#585858"/><rect x="447.60" y="391.35" width="0.9" height="1.15" fill="#666666"/><rect x="448.20" y="387.70" width="0.7" height="4.80" fill="#7a7a7a"/><rect x="448.80" y="391.41" width="0.7" height="1.09" fill="#8c8c8c"/><rect x="449.40" y="388.94" width="1.4" height="3.56" fill="#8c8c8c"/><rect x="450.00" y="389.28" width="0.7" height="3.22" fill="#585858"/><rect x="450.60" y="388.64" width="1.1" height="3.86" fill="#7a7a7a"/><rect x="451.20" y="391.59" width="1.1" height="0.91" fill="#8c8c8c"/><rect x="451.80" y="391.28" width="0.9" height="1.22" fill="#8c8c8c"/><rect x="453.60" y="390.40" width="0.9" height="2.10" fill="#4e4e4e"/><rect x="454.20" y="389.71" width="1.1" height="2.79" fill="#666666"/><rect x="454.80" y="388.23" width="1.4" height="4.27" fill="#8c8c8c"/><rect x="456.00" y="388.27" width="1.1" height="4.23" fill="#8c8c8c"/><rect x="456.60" y="390.71" width="1.1" height="1.79" fill="#b0b0b0"/><rect x="457.80" y="390.57" width="1.1" height="1.93" fill="#585858"/><rect x="458.40" y="389.47" width="1.4" height="3.03" fill="#8c8c8c"/><rect x="459.00" y="390.44" width="1.1" height="2.06" fill="#666666"/><rect x="459.60" y="390.54" width="0.9" height="1.96" fill="#7a7a7a"/><rect x="460.20" y="390.88" width="0.7" height="1.62" fill="#b0b0b0"/><rect x="460.80" y="391.29" width="0.7" height="1.21" fill="#a0a0a0"/><rect x="461.40" y="387.76" width="1.1" height="4.74" fill="#8c8c8c"/><rect x="462.00" y="391.14" width="0.9" height="1.36" fill="#a0a0a0"/><rect x="462.60" y="387.76" width="1.1" height="4.74" fill="#4e4e4e"/><rect x="463.20" y="388.92" width="1.4" height="3.58" fill="#b0b0b0"/><rect x="463.80" y="391.53" width="0.9" height="0.97" fill="#8c8c8c"/><rect x="464.40" y="390.92" width="1.4" height="1.58" fill="#8c8c8c"/><rect x="465.00" y="389.66" width="0.7" height="2.84" fill="#666666"/><rect x="465.60" y="390.73" width="1.1" height="1.77" fill="#8c8c8c"/><rect x="466.00" y="390.78" width="0.7" height="1.72" fill="#b0b0b0"/><rect x="466.60" y="390.28" width="0.7" height="2.22" fill="#4e4e4e"/><rect x="467.20" y="383.85" width="1.4" height="8.65" fill="#4e4e4e"/><rect x="467.80" y="385.78" width="1.4" height="6.72" fill="#b0b0b0"/><rect x="468.40" y="389.80" width="1.1" height="2.70" fill="#7a7a7a"/><rect x="469.00" y="390.00" width="1.1" height="2.50" fill="#666666"/><rect x="469.60" y="390.48" width="1.1" height="2.02" fill="#585858"/><rect x="470.20" y="387.56" width="1.1" height="4.94" fill="#a0a0a0"/><rect x="470.80" y="391.25" width="0.7" height="1.25" fill="#8c8c8c"/><rect x="471.40" y="391.04" width="0.7" height="1.46" fill="#a0a0a0"/><rect x="472.00" y="390.11" width="0.7" height="2.39" fill="#8c8c8c"/><rect x="472.60" y="391.60" width="1.4" height="0.90" fill="#585858"/><rect x="473.20" y="385.71" width="1.4" height="6.79" fill="#a0a0a0"/><rect x="473.80" y="386.16" width="0.7" height="6.34" fill="#a0a0a0"/><rect x="474.40" y="387.30" width="0.9" height="5.20" fill="#585858"/><rect x="475.00" y="391.62" width="0.7" height="0.88" fill="#585858"/><rect x="475.60" y="387.73" width="0.9" height="4.77" fill="#585858"/><rect x="476.20" y="388.26" width="0.9" height="4.24" fill="#7a7a7a"/><rect x="476.80" y="390.75" width="0.7" height="1.75" fill="#b0b0b0"/><rect x="477.40" y="389.89" width="1.4" height="2.61" fill="#585858"/><rect x="478.00" y="383.10" width="1.4" height="9.40" fill="#4e4e4e"/><rect x="478.60" y="381.71" width="1.4" height="10.79" fill="#666666"/><rect x="479.20" y="391.52" width="0.9" height="0.98" fill="#8c8c8c"/><rect x="479.80" y="387.45" width="0.7" height="5.05" fill="#4e4e4e"/><rect x="480.40" y="384.58" width="0.9" height="7.92" fill="#4e4e4e"/><rect x="481.00" y="390.45" width="0.9" height="2.05" fill="#8c8c8c"/><rect x="481.60" y="390.06" width="0.9" height="2.44" fill="#b0b0b0"/><rect x="482.00" y="390.44" width="1.4" height="2.06" fill="#b0b0b0"/><rect x="482.60" y="384.98" width="0.7" height="7.52" fill="#4e4e4e"/><rect x="483.20" y="390.40" width="0.7" height="2.10" fill="#585858"/><rect x="483.80" y="390.50" width="1.4" height="2.00" fill="#585858"/><rect x="484.40" y="389.80" width="1.4" height="2.70" fill="#b0b0b0"/><rect x="485.00" y="389.77" width="1.1" height="2.73" fill="#4e4e4e"/><rect x="485.60" y="390.10" width="1.4" height="2.40" fill="#8c8c8c"/><rect x="486.20" y="391.16" width="1.1" height="1.34" fill="#585858"/><rect x="486.80" y="389.75" width="1.1" height="2.75" fill="#b0b0b0"/><rect x="487.40" y="389.63" width="1.1" height="2.87" fill="#666666"/><rect x="488.00" y="385.02" width="1.4" height="7.48" fill="#8c8c8c"/><rect x="488.60" y="381.66" width="0.7" height="10.84" fill="#7a7a7a"/><rect x="489.20" y="391.39" width="0.7" height="1.11" fill="#585858"/><rect x="489.80" y="389.92" width="0.9" height="2.58" fill="#a0a0a0"/><rect x="490.40" y="381.66" width="1.4" height="10.84" fill="#b0b0b0"/><rect x="491.00" y="390.59" width="1.4" height="1.91" fill="#585858"/><rect x="491.60" y="385.60" width="1.1" height="6.90" fill="#666666"/><rect x="492.20" y="387.65" width="1.1" height="4.85" fill="#666666"/><rect x="492.80" y="390.93" width="0.7" height="1.57" fill="#a0a0a0"/><rect x="493.40" y="391.57" width="1.1" height="0.93" fill="#8c8c8c"/><rect x="494.00" y="390.75" width="0.9" height="1.75" fill="#a0a0a0"/><rect x="494.60" y="391.34" width="1.1" height="1.16" fill="#b0b0b0"/><rect x="495.20" y="387.93" width="0.9" height="4.57" fill="#a0a0a0"/><rect x="495.80" y="383.54" width="0.7" height="8.96" fill="#585858"/><rect x="496.40" y="391.54" width="0.7" height="0.96" fill="#7a7a7a"/><rect x="497.00" y="391.66" width="0.9" height="0.84" fill="#4e4e4e"/><rect x="497.60" y="383.58" width="0.9" height="8.92" fill="#a0a0a0"/><rect x="498.20" y="387.83" width="0.9" height="4.67" fill="#8c8c8c"/><rect x="498.80" y="391.30" width="1.4" height="1.20" fill="#666666"/><rect x="499.40" y="390.59" width="1.4" height="1.91" fill="#585858"/><rect x="500.00" y="385.76" width="1.4" height="6.74" fill="#585858"/><rect x="500.60" y="389.30" width="0.9" height="3.20" fill="#7a7a7a"/><rect x="501.20" y="382.48" width="0.9" height="10.02" fill="#8c8c8c"/><rect x="501.80" y="389.77" width="0.9" height="2.73" fill="#b0b0b0"/><rect x="502.40" y="380.85" width="0.7" height="11.65" fill="#4e4e4e"/><rect x="503.00" y="390.13" width="1.4" height="2.37" fill="#b0b0b0"/><rect x="503.60" y="390.19" width="1.1" height="2.31" fill="#666666"/><rect x="504.20" y="390.39" width="1.1" height="2.11" fill="#8c8c8c"/><rect x="504.80" y="390.95" width="0.9" height="1.55" fill="#8c8c8c"/><rect x="505.40" y="385.68" width="1.4" height="6.82" fill="#4e4e4e"/><rect x="506.00" y="391.63" width="0.9" height="0.87" fill="#585858"/><rect x="506.60" y="388.06" width="0.9" height="4.44" fill="#b0b0b0"/><rect x="507.20" y="380.94" width="0.7" height="11.56" fill="#8c8c8c"/><rect x="507.80" y="391.02" width="0.9" height="1.48" fill="#585858"/><rect x="508.40" y="389.07" width="0.7" height="3.43" fill="#666666"/><rect x="509.00" y="389.92" width="0.9" height="2.58" fill="#8c8c8c"/><rect x="509.60" y="391.39" width="1.1" height="1.11" fill="#7a7a7a"/><rect x="510.20" y="390.72" width="1.4" height="1.78" fill="#7a7a7a"/><rect x="510.80" y="389.74" width="0.9" height="2.76" fill="#4e4e4e"/><rect x="511.40" y="389.18" width="0.9" height="3.32" fill="#585858"/><rect x="512.00" y="391.18" width="0.9" height="1.32" fill="#666666"/><rect x="512.60" y="389.91" width="1.1" height="2.59" fill="#4e4e4e"/><rect x="513.20" y="387.75" width="1.1" height="4.75" fill="#a0a0a0"/><rect x="513.80" y="390.12" width="1.1" height="2.38" fill="#a0a0a0"/><rect x="514.40" y="389.88" width="1.1" height="2.62" fill="#666666"/><rect x="515.00" y="391.34" width="0.9" height="1.16" fill="#585858"/><rect x="515.60" y="391.54" width="1.4" height="0.96" fill="#4e4e4e"/><rect x="516.20" y="391.43" width="0.9" height="1.07" fill="#b0b0b0"/><rect x="516.80" y="391.57" width="1.4" height="0.93" fill="#b0b0b0"/><rect x="517.40" y="383.39" width="1.1" height="9.11" fill="#7a7a7a"/><rect x="518.00" y="385.54" width="0.7" height="6.96" fill="#4e4e4e"/><rect x="518.60" y="389.11" width="1.1" height="3.39" fill="#b0b0b0"/><rect x="519.20" y="385.36" width="0.9" height="7.14" fill="#4e4e4e"/><rect x="519.80" y="385.92" width="1.4" height="6.58" fill="#7a7a7a"/><rect x="520.40" y="390.99" width="1.1" height="1.51" fill="#666666"/><rect x="521.00" y="383.04" width="1.1" height="9.46" fill="#4e4e4e"/><rect x="521.60" y="383.53" width="0.7" height="8.97" fill="#a0a0a0"/><rect x="522.20" y="391.66" width="0.9" height="0.84" fill="#4e4e4e"/><rect x="522.80" y="391.08" width="0.7" height="1.42" fill="#a0a0a0"/><rect x="523.40" y="382.07" width="0.7" height="10.43" fill="#7a7a7a"/><rect x="524.00" y="387.66" width="1.4" height="4.84" fill="#666666"/><rect x="524.60" y="382.20" width="1.1" height="10.30" fill="#4e4e4e"/><rect x="525.20" y="390.70" width="0.7" height="1.80" fill="#7a7a7a"/><rect x="525.80" y="391.43" width="0.9" height="1.07" fill="#a0a0a0"/><rect x="526.40" y="390.55" width="1.4" height="1.95" fill="#b0b0b0"/><rect x="527.00" y="385.57" width="1.4" height="6.93" fill="#8c8c8c"/><rect x="527.60" y="389.54" width="1.1" height="2.96" fill="#4e4e4e"/><rect x="528.20" y="391.03" width="1.1" height="1.47" fill="#8c8c8c"/><rect x="528.80" y="389.46" width="0.9" height="3.04" fill="#a0a0a0"/><rect x="529.40" y="385.00" width="0.7" height="7.50" fill="#8c8c8c"/><rect x="530.00" y="391.56" width="0.9" height="0.94" fill="#8c8c8c"/><rect x="530.60" y="391.42" width="1.4" height="1.08" fill="#8c8c8c"/><rect x="531.20" y="385.81" width="0.7" height="6.69" fill="#4e4e4e"/><rect x="531.80" y="385.66" width="1.1" height="6.84" fill="#a0a0a0"/><rect x="532.40" y="389.54" width="1.1" height="2.96" fill="#4e4e4e"/><rect x="533.00" y="391.23" width="1.1" height="1.27" fill="#4e4e4e"/><rect x="533.60" y="391.37" width="1.1" height="1.13" fill="#4e4e4e"/><rect x="534.20" y="385.60" width="0.7" height="6.90" fill="#8c8c8c"/><rect x="534.80" y="381.01" width="1.1" height="11.49" fill="#a0a0a0"/><rect x="535.00" y="390.86" width="1.4" height="1.64" fill="#7a7a7a"/><rect x="536.20" y="391.18" width="1.1" height="1.32" fill="#b0b0b0"/><rect x="536.80" y="391.45" width="1.1" height="1.05" fill="#8c8c8c"/><rect x="537.40" y="391.62" width="1.4" height="0.88" fill="#a0a0a0"/><rect x="538.60" y="390.76" width="1.1" height="1.74" fill="#666666"/><rect x="539.20" y="391.59" width="1.1" height="0.91" fill="#666666"/><rect x="539.80" y="391.48" width="1.1" height="1.02" fill="#a0a0a0"/><rect x="540.40" y="391.54" width="1.1" height="0.96" fill="#8c8c8c"/><rect x="541.60" y="391.32" width="0.9" height="1.18" fill="#b0b0b0"/><rect x="542.20" y="391.22" width="1.1" height="1.28" fill="#666666"/><rect x="543.40" y="390.85" width="1.4" height="1.65" fill="#585858"/><rect x="544.00" y="390.92" width="0.9" height="1.58" fill="#b0b0b0"/><rect x="544.60" y="391.54" width="0.7" height="0.96" fill="#a0a0a0"/><rect x="545.00" y="387.00" width="1.1" height="5.50" fill="#8c8c8c"/><rect x="545.60" y="389.66" width="1.4" height="2.84" fill="#8c8c8c"/><rect x="546.20" y="391.28" width="1.4" height="1.22" fill="#a0a0a0"/><rect x="546.80" y="390.81" width="1.4" height="1.69" fill="#8c8c8c"/><rect x="547.40" y="391.34" width="1.4" height="1.16" fill="#666666"/><rect x="548.00" y="390.31" width="1.1" height="2.19" fill="#7a7a7a"/><rect x="549.20" y="391.31" width="0.7" height="1.19" fill="#8c8c8c"/><rect x="549.80" y="390.62" width="1.1" height="1.88" fill="#7a7a7a"/><rect x="550.40" y="387.19" width="1.4" height="5.31" fill="#a0a0a0"/><rect x="551.00" y="390.99" width="1.4" height="1.51" fill="#7a7a7a"/><rect x="551.60" y="389.34" width="1.4" height="3.16" fill="#4e4e4e"/><rect x="552.20" y="391.03" width="0.9" height="1.47" fill="#a0a0a0"/><rect x="552.80" y="387.30" width="1.1" height="5.20" fill="#8c8c8c"/><rect x="553.40" y="390.30" width="1.1" height="2.20" fill="#7a7a7a"/><rect x="554.00" y="391.33" width="0.7" height="1.17" fill="#666666"/><rect x="554.60" y="391.29" width="1.4" height="1.21" fill="#a0a0a0"/><rect x="555.20" y="390.72" width="0.9" height="1.78" fill="#666666"/><rect x="555.80" y="391.02" width="1.1" height="1.48" fill="#4e4e4e"/><rect x="556.40" y="388.91" width="1.4" height="3.59" fill="#b0b0b0"/><rect x="557.00" y="390.85" width="0.7" height="1.65" fill="#a0a0a0"/><rect x="557.60" y="391.58" width="0.7" height="0.92" fill="#4e4e4e"/><rect x="558.20" y="391.04" width="0.9" height="1.46" fill="#7a7a7a"/><rect x="558.80" y="391.55" width="0.7" height="0.95" fill="#666666"/><rect x="559.40" y="390.56" width="1.4" height="1.94" fill="#8c8c8c"/><rect x="560.00" y="390.36" width="1.1" height="2.14" fill="#4e4e4e"/><rect x="560.60" y="391.37" width="1.1" height="1.13" fill="#4e4e4e"/><rect x="561.20" y="385.68" width="1.1" height="6.82" fill="#4e4e4e"/><rect x="561.80" y="390.46" width="1.4" height="2.04" fill="#666666"/><rect x="562.40" y="387.46" width="0.9" height="5.04" fill="#a0a0a0"/><rect x="563.00" y="390.58" width="0.9" height="1.92" fill="#585858"/><rect x="563.60" y="386.14" width="1.4" height="6.36" fill="#7a7a7a"/><rect x="564.20" y="387.27" width="0.9" height="5.23" fill="#4e4e4e"/><rect x="564.80" y="389.21" width="1.1" height="3.29" fill="#8c8c8c"/><rect x="565.40" y="390.45" width="0.9" height="2.05" fill="#585858"/><rect x="566.00" y="391.25" width="1.1" height="1.25" fill="#4e4e4e"/><rect x="566.60" y="391.30" width="1.4" height="1.20" fill="#585858"/><rect x="567.20" y="388.39" width="1.1" height="4.11" fill="#8c8c8c"/><rect x="567.80" y="391.14" width="0.9" height="1.36" fill="#7a7a7a"/><rect x="568.40" y="391.67" width="0.9" height="0.83" fill="#585858"/><rect x="666.00" y="391.37" width="0.9" height="1.13" fill="#a0a0a0"/><rect x="666.60" y="390.35" width="0.9" height="2.15" fill="#666666"/><rect x="667.20" y="391.01" width="0.9" height="1.49" fill="#b0b0b0"/><rect x="667.80" y="391.35" width="1.4" height="1.15" fill="#585858"/><rect x="668.40" y="383.51" width="1.4" height="8.99" fill="#a0a0a0"/><rect x="669.00" y="391.28" width="0.9" height="1.22" fill="#a0a0a0"/><rect x="669.60" y="388.03" width="1.1" height="4.47" fill="#4e4e4e"/><rect x="670.20" y="389.92" width="0.9" height="2.58" fill="#b0b0b0"/><rect x="670.80" y="391.55" width="0.9" height="0.95" fill="#666666"/><rect x="671.40" y="389.68" width="1.1" height="2.82" fill="#a0a0a0"/><rect x="673.20" y="389.74" width="0.9" height="2.76" fill="#7a7a7a"/><rect x="674.40" y="390.26" width="0.9" height="2.24" fill="#8c8c8c"/><rect x="675.60" y="390.34" width="1.1" height="2.16" fill="#b0b0b0"/><rect x="676.80" y="388.66" width="1.4" height="3.84" fill="#585858"/><rect x="677.40" y="389.47" width="1.1" height="3.03" fill="#4e4e4e"/><rect x="678.60" y="389.88" width="0.9" height="2.62" fill="#4e4e4e"/><rect x="679.20" y="389.55" width="0.7" height="2.95" fill="#b0b0b0"/><rect x="695.50" y="390.27" width="0.9" height="2.23" fill="#a0a0a0"/><rect x="696.10" y="390.80" width="1.1" height="1.70" fill="#8c8c8c"/><rect x="696.70" y="391.17" width="1.1" height="1.33" fill="#b0b0b0"/><rect x="697.30" y="389.49" width="0.7" height="3.01" fill="#b0b0b0"/><rect x="697.90" y="390.97" width="0.9" height="1.53" fill="#7a7a7a"/><rect x="270.15" y="375.80" width="0.8" height="16.70" fill="#555"/><rect x="323.95" y="359.20" width="0.8" height="33.30" fill="#555"/><rect x="375.35" y="338.30" width="0.8" height="54.20" fill="#555"/><rect x="409.25" y="344.10" width="0.8" height="48.40" fill="#555"/><rect x="472.75" y="273.10" width="0.8" height="119.40" fill="#555"/><rect x="666.95" y="380.50" width="0.8" height="12.00" fill="#555"/><rect x="668.45" y="384.50" width="0.8" height="8.00" fill="#555"/><rect x="669.95" y="387.50" width="0.8" height="5.00" fill="#555"/><rect x="672.05" y="382.00" width="0.8" height="10.50" fill="#555"/><rect x="674.45" y="385.40" width="0.8" height="7.10" fill="#555"/><rect x="675.85" y="388.20" width="0.8" height="4.30" fill="#555"/><rect x="677.95" y="387.80" width="0.8" height="4.70" fill="#555"/><rect x="686.25" y="391.20" width="0.8" height="1.30" fill="#555"/><rect x="717.95" y="388.50" width="0.8" height="4.00" fill="#555"/><rect x="742.25" y="389.20" width="0.8" height="3.30" fill="#555"/><rect x="744.25" y="389.40" width="0.8" height="3.10" fill="#555"/><path d="M257.6 267.8 V392.5 H754.2" fill="none" stroke="#7a7a7a" stroke-width="0.8"/></svg>
<div class="t" style="transform:translate(253.06px,390.88px) scaleX(1.2);font-size:4.4px;color:#1a1a1a;-webkit-text-stroke:0.03px #1a1a1a;-webkit-text-stroke:0;">0</div>
<div class="t" style="transform:translate(247.19px,382.51px) scaleX(1.2);font-size:4.4px;color:#1a1a1a;-webkit-text-stroke:0.03px #1a1a1a;-webkit-text-stroke:0;">100</div>
<div class="t" style="transform:translate(247.19px,374.14px) scaleX(1.2);font-size:4.4px;color:#1a1a1a;-webkit-text-stroke:0.03px #1a1a1a;-webkit-text-stroke:0;">200</div>
<div class="t" style="transform:translate(247.19px,365.77px) scaleX(1.2);font-size:4.4px;color:#1a1a1a;-webkit-text-stroke:0.03px #1a1a1a;-webkit-text-stroke:0;">300</div>
<div class="t" style="transform:translate(247.19px,357.40px) scaleX(1.2);font-size:4.4px;color:#1a1a1a;-webkit-text-stroke:0.03px #1a1a1a;-webkit-text-stroke:0;">400</div>
<div class="t" style="transform:translate(247.19px,349.03px) scaleX(1.2);font-size:4.4px;color:#1a1a1a;-webkit-text-stroke:0.03px #1a1a1a;-webkit-text-stroke:0;">500</div>
<div class="t" style="transform:translate(247.19px,340.66px) scaleX(1.2);font-size:4.4px;color:#1a1a1a;-webkit-text-stroke:0.03px #1a1a1a;-webkit-text-stroke:0;">600</div>
<div class="t" style="transform:translate(247.19px,332.29px) scaleX(1.2);font-size:4.4px;color:#1a1a1a;-webkit-text-stroke:0.03px #1a1a1a;-webkit-text-stroke:0;">700</div>
<div class="t" style="transform:translate(247.19px,323.92px) scaleX(1.2);font-size:4.4px;color:#1a1a1a;-webkit-text-stroke:0.03px #1a1a1a;-webkit-text-stroke:0;">800</div>
<div class="t" style="transform:translate(247.19px,315.55px) scaleX(1.2);font-size:4.4px;color:#1a1a1a;-webkit-text-stroke:0.03px #1a1a1a;-webkit-text-stroke:0;">900</div>
<div class="t" style="transform:translate(244.26px,307.18px) scaleX(1.2);font-size:4.4px;color:#1a1a1a;-webkit-text-stroke:0.03px #1a1a1a;-webkit-text-stroke:0;">1000</div>
<div class="t" style="transform:translate(244.65px,298.81px) scaleX(1.2);font-size:4.4px;color:#1a1a1a;-webkit-text-stroke:0.03px #1a1a1a;-webkit-text-stroke:0;">1100</div>
<div class="t" style="transform:translate(244.26px,290.44px) scaleX(1.2);font-size:4.4px;color:#1a1a1a;-webkit-text-stroke:0.03px #1a1a1a;-webkit-text-stroke:0;">1200</div>
<div class="t" style="transform:translate(244.26px,282.07px) scaleX(1.2);font-size:4.4px;color:#1a1a1a;-webkit-text-stroke:0.03px #1a1a1a;-webkit-text-stroke:0;">1300</div>
<div class="t" style="transform:translate(244.26px,273.70px) scaleX(1.2);font-size:4.4px;color:#1a1a1a;-webkit-text-stroke:0.03px #1a1a1a;-webkit-text-stroke:0;">1400</div>
<div class="t" style="transform:translate(263.17px,395.74px) scaleX(1.28);font-size:4.2px;color:#1a1a1a;-webkit-text-stroke:0.03px #1a1a1a;-webkit-text-stroke:0;">0:00</div>
<div class="t" style="transform:translate(302.07px,395.74px) scaleX(1.28);font-size:4.2px;color:#1a1a1a;-webkit-text-stroke:0.03px #1a1a1a;-webkit-text-stroke:0;">5:00</div>
<div class="t" style="transform:translate(336.57px,395.74px) scaleX(1.28);font-size:4.2px;color:#1a1a1a;-webkit-text-stroke:0.03px #1a1a1a;-webkit-text-stroke:0;">10:00</div>
<div class="t" style="transform:translate(372.57px,395.74px) scaleX(1.28);font-size:4.2px;color:#1a1a1a;-webkit-text-stroke:0.03px #1a1a1a;-webkit-text-stroke:0;">15:00</div>
<div class="t" style="transform:translate(410.27px,395.74px) scaleX(1.28);font-size:4.2px;color:#1a1a1a;-webkit-text-stroke:0.03px #1a1a1a;-webkit-text-stroke:0;">20:00</div>
<div class="t" style="transform:translate(448.07px,395.74px) scaleX(1.28);font-size:4.2px;color:#1a1a1a;-webkit-text-stroke:0.03px #1a1a1a;-webkit-text-stroke:0;">25:00</div>
<div class="t" style="transform:translate(485.87px,395.74px) scaleX(1.28);font-size:4.2px;color:#1a1a1a;-webkit-text-stroke:0.03px #1a1a1a;-webkit-text-stroke:0;">30:00</div>
<div class="t" style="transform:translate(522.77px,395.74px) scaleX(1.28);font-size:4.2px;color:#1a1a1a;-webkit-text-stroke:0.03px #1a1a1a;-webkit-text-stroke:0;">35:00</div>
<div class="t" style="transform:translate(559.77px,395.74px) scaleX(1.28);font-size:4.2px;color:#1a1a1a;-webkit-text-stroke:0.03px #1a1a1a;-webkit-text-stroke:0;">40:00</div>
<div class="t" style="transform:translate(596.87px,395.74px) scaleX(1.28);font-size:4.2px;color:#1a1a1a;-webkit-text-stroke:0.03px #1a1a1a;-webkit-text-stroke:0;">45:00</div>
<div class="t" style="transform:translate(634.27px,395.74px) scaleX(1.28);font-size:4.2px;color:#1a1a1a;-webkit-text-stroke:0.03px #1a1a1a;-webkit-text-stroke:0;">50:00</div>
<div class="t" style="transform:translate(671.27px,395.74px) scaleX(1.28);font-size:4.2px;color:#1a1a1a;-webkit-text-stroke:0.03px #1a1a1a;-webkit-text-stroke:0;">55:00</div>
<div class="t" style="transform:translate(706.83px,395.74px) scaleX(1.28);font-size:4.2px;color:#1a1a1a;-webkit-text-stroke:0.03px #1a1a1a;-webkit-text-stroke:0;">1:00:00</div>
<div class="t" style="transform:translate(743.77px,395.74px) scaleX(1.28);font-size:4.2px;color:#1a1a1a;-webkit-text-stroke:0.03px #1a1a1a;-webkit-text-stroke:0;">1:05</div>
</body></html>
